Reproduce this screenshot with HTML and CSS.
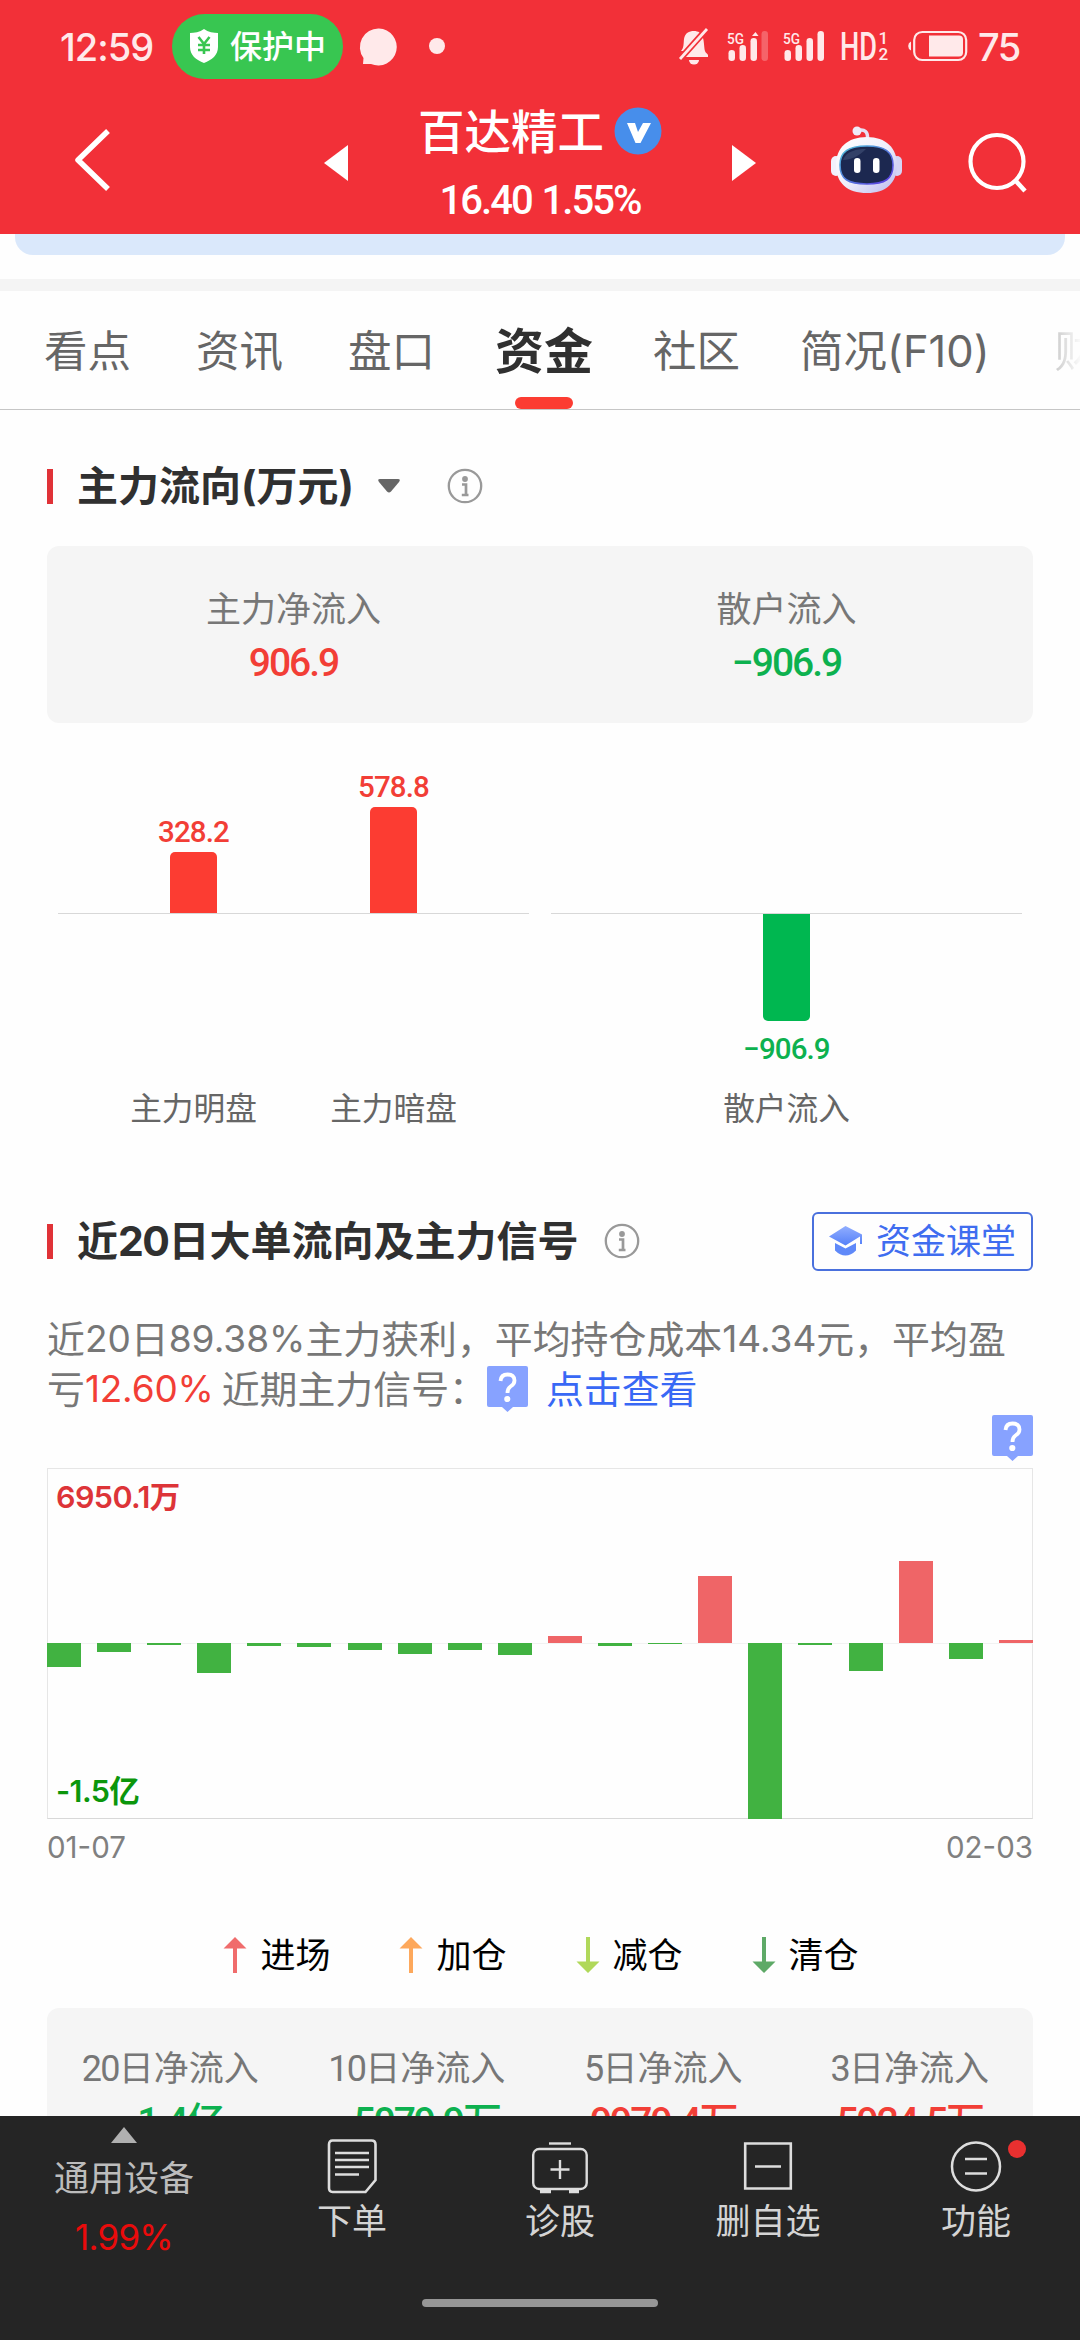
FILE: index.html
```html
<!DOCTYPE html>
<html lang="zh-CN">
<head>
<meta charset="utf-8">
<meta name="viewport" content="width=1080">
<title>百达精工 资金</title>
<link rel="stylesheet" href="styles.css">
</head>
<body>
<div class="screen">
  <header class="header">
    <div class="status">
      <span class="clock">12:59</span>
      <span class="pill">
        <svg width="30" height="34" viewBox="0 0 30 34"><path d="M15 0C19 3 25 4 29 4V18C29 26 23 31 15 34C7 31 1 26 1 18V4C5 4 11 3 15 0Z" fill="#fff"/><path d="M9.500 8L15 15L20.500 8M15 15V25M9 16H21M9 21H21" fill="none" stroke="#38c651" stroke-width="2.600"/></svg>
        <span>保护中</span>
      </span>
      <svg class="bubble" width="38" height="38" viewBox="0 0 38 38"><path d="M19 0.500A18.500 18.500 0 1 1 11 36L3 36L3.500 30A18.500 18.500 0 0 1 19 0.500Z" fill="#ffe9ea"/></svg>
      <span class="status-dot"></span>
      <span class="status-right">
        <svg width="30" height="38" viewBox="0 0 30 38"><path d="M2 24C5 21 4.500 16 5 12C6 6 10 4 15 4C17 4 19 4.500 20.500 5.500L4 24ZM7 30L24 11C25 14 25 18 25.500 22C26 26 28 26 29 28V30Z" fill="#ffe9ea"/><path d="M10 33H20A5 4.500 0 0 1 10 33Z" fill="#ffe9ea"/><path d="M1 32L28 2" stroke="#ffe9ea" stroke-width="2.800"/></svg>
        <svg class="signal" width="42" height="32" viewBox="0 0 42 32"><text x="0" y="13.500" class="net" textLength="17" lengthAdjust="spacingAndGlyphs">5G</text><g fill="#ffe9ea"><rect x="1.500" y="20" width="6.500" height="11" rx="3.200"/><rect x="12.500" y="15" width="6.500" height="16" rx="3.200"/><rect x="23.500" y="8" width="6.500" height="23" rx="3.200"/><path d="M25 6L28.500 2L31.500 6Z"/><rect x="34.500" y="1" width="6.500" height="30" rx="3.200" opacity=".28"/></g></svg>
        <svg class="signal second" width="42" height="32" viewBox="0 0 42 32"><text x="0" y="13.500" class="net" textLength="17" lengthAdjust="spacingAndGlyphs">5G</text><g fill="#ffe9ea"><rect x="1.500" y="20" width="6.500" height="11" rx="3.200"/><rect x="12.500" y="15" width="6.500" height="16" rx="3.200"/><rect x="23.500" y="8" width="6.500" height="23" rx="3.200"/><rect x="34.500" y="1" width="6.500" height="30" rx="3.200"/></g></svg>
        <svg class="hd" width="48" height="34" viewBox="0 0 48 34"><g fill="#ffe9ea" class="hd-text"><text x="-1" y="31" font-size="39" textLength="37" lengthAdjust="spacingAndGlyphs">HD</text><text x="37.500" y="14.500" font-size="17">1</text><text x="37.500" y="31" font-size="17">2</text></g></svg>
        <svg class="battery" width="60" height="32" viewBox="0 0 60 32"><path d="M3 11.500A5 5 0 0 0 3 20.500Z" fill="#ffe9ea"/><rect x="6.200" y="2" width="52" height="28" rx="8" fill="none" stroke="#ffe9ea" stroke-width="2.200"/><path d="M21 5.500H51Q55 5.500 55 9.500V22.500Q55 26.500 51 26.500H21Z" fill="#ffe9ea"/></svg>
        <span class="clock level">75</span>
      </span>
    </div>
    <div class="titlebar">
      <svg class="back" width="38" height="66" viewBox="0 0 38 66"><path d="M34 4L4 33L34 62" fill="none" stroke="#fff" stroke-width="5.500" stroke-linejoin="round"/></svg>
      <svg class="prev" width="24" height="36" viewBox="0 0 24 36"><path d="M24 0V36L0 18Z" fill="#fff"/></svg>
      <div class="stock">
        <div class="stock-name"><span>百达精工</span>
          <svg width="48" height="48" viewBox="0 0 48 48"><circle cx="24" cy="24" r="23.500" fill="#478eeb"/><path d="M13 16H21L24 25L29 16H37L26.500 36H21.500Z" fill="#fff"/></svg>
        </div>
        <div class="stock-price">16.40 1.55%</div>
      </div>
      <svg class="next" width="24" height="36" viewBox="0 0 24 36"><path d="M0 0V36L24 18Z" fill="#fff"/></svg>
      <svg class="robot" width="72" height="68" viewBox="0 0 72 68">
        <defs><linearGradient id="shell" x1="0" y1="0" x2="1" y2="1"><stop offset="0" stop-color="#fff"/><stop offset=".5" stop-color="#f0effb"/><stop offset="1" stop-color="#b9b9ee"/></linearGradient><linearGradient id="rim" x1="0" y1="0" x2="1" y2="1"><stop offset="0" stop-color="#4fc3d9"/><stop offset="1" stop-color="#5a35e0"/></linearGradient></defs>
        <path d="M27 4.500C34 3 37 6 36.500 13" fill="none" stroke="#e6e0f4" stroke-width="3.500"/><circle cx="26" cy="5" r="4.500" fill="#efeaf8"/>
        <rect x="0" y="30" width="10" height="20" rx="5" fill="#f2f0fc"/><rect x="61" y="30" width="10" height="20" rx="5" fill="#d5d4f4"/>
        <path d="M36 11C55 11 66 22 66 39C66 57 55 67 36 67C16 67 5 57 5 39C5 22 16 11 36 11Z" fill="url(#shell)"/>
        <path d="M36 20C54 20 62 26 62 39C62 53 54 58 36 58C17 58 9 53 9 39C9 26 17 20 36 20Z" fill="#1c2850" stroke="url(#rim)" stroke-width="1.600"/>
        <path d="M12 34C15 25 26 23 35 23C28 30 20 34 12 34Z" fill="#47557c" opacity=".55"/>
        <rect x="23" y="32" width="6.500" height="15" rx="3.200" fill="#fff"/><rect x="42" y="32" width="6.500" height="15" rx="3.200" fill="#fff"/>
      </svg>
      <svg class="search" width="60" height="62" viewBox="0 0 60 62"><circle cx="29" cy="29.500" r="26.500" fill="none" stroke="#fff" stroke-width="4.200"/><path d="M47 48L57 59" stroke="#fff" stroke-width="4.500"/></svg>
    </div>
  </header>

  <main class="content">
    <div class="promo"></div>
    <div class="divider"></div>
    <nav class="tabs">
      <span class="tab">看点</span><span class="tab">资讯</span><span class="tab">盘口</span><span class="tab active">资金</span><span class="tab wide">社区</span><span class="tab">简况(F10)</span><span class="tab cut">财务</span>
    </nav>

    <section class="flow">
      <div class="section-head">
        <i class="mark"></i><h2>主力流向(万元)</h2>
        <svg class="caret" width="24" height="16" viewBox="0 0 24 16"><path d="M3 1H21Q24 1 22 4L14 13.500Q12 15.500 10 13.500L2 4Q0 1 3 1Z" fill="#666"/></svg>
        <svg class="info" width="36" height="36" viewBox="0 0 36 36"><circle cx="18" cy="18" r="16.200" fill="none" stroke="#999" stroke-width="2.300"/><circle cx="18" cy="11" r="2.900" fill="#999"/><path d="M15 16.500H19V27M14.800 27H21.500" fill="none" stroke="#999" stroke-width="2.700"/></svg>
      </div>
      <div class="summary">
        <div class="cell"><span class="label">主力净流入</span><span class="num up">906.9</span></div>
        <div class="cell"><span class="label">散户流入</span><span class="num down">−906.9</span></div>
      </div>
      <div class="bars">
        <div class="group">
          <div class="column"><div class="pos"><span class="val up">328.2</span><i class="bar" style="height:61px"></i></div><span class="name">主力明盘</span></div>
          <div class="column"><div class="pos"><span class="val up">578.8</span><i class="bar" style="height:106px"></i></div><span class="name">主力暗盘</span></div>
        </div>
        <div class="group">
          <div class="column"><div class="pos"></div><div class="neg"><i class="bar" style="height:107px"></i><span class="val down">−906.9</span></div><span class="name">散户流入</span></div>
        </div>
      </div>
    </section>

    <section class="signals">
      <div class="section-head">
        <i class="mark"></i><h2>近<span class="digits">20</span>日大单流向及主力信号</h2>
        <svg class="info near" width="36" height="36" viewBox="0 0 36 36"><circle cx="18" cy="18" r="16.200" fill="none" stroke="#999" stroke-width="2.300"/><circle cx="18" cy="11" r="2.900" fill="#999"/><path d="M15 16.500H19V27M14.800 27H21.500" fill="none" stroke="#999" stroke-width="2.700"/></svg>
        <span class="course">
          <svg width="34" height="30" viewBox="0 0 34 30"><defs><linearGradient id="cap" x1="0" y1="0" x2="0" y2="1"><stop offset="0" stop-color="#91aeff"/><stop offset="1" stop-color="#5580f8"/></linearGradient></defs><path d="M16.500 0L33 8.500V18H31V10.500L16.500 19.500L0 10.500Z" fill="url(#cap)"/><path d="M6 17L16.500 22.500L27 17V24.500Q22 29.500 16.500 29.500T6 24.500Z" fill="#5f89f9"/></svg>
          资金课堂</span>
      </div>
      <p class="desc"><span class="line">近<b>20</b>日<b>89.38%</b>主力获利，平均持仓成本<b>14.34</b>元，平均盈</span><span class="line">亏<b class="up">12.60%</b><span class="gap"></span>近期主力信号：<svg class="tip" width="41" height="46" viewBox="0 0 41 46"><path d="M2 0H39Q41 0 41 2V39Q41 41 39 41H26L20.500 46L15 41H2Q0 41 0 39V2Q0 0 2 0Z" fill="#87a2ff"/><path d="M13.500 15Q14 8.500 20.500 8.500Q27.500 8.500 27.500 14.500Q27.500 18 23.500 20.500Q20.500 22.500 20.500 27" fill="none" stroke="#fff" stroke-width="3.800"/><circle cx="20.300" cy="33" r="3.100" fill="#fff"/></svg><a class="link">点击查看</a></span></p>
      <div class="tip-row"><svg class="tip" width="41" height="46" viewBox="0 0 41 46"><path d="M2 0H39Q41 0 41 2V39Q41 41 39 41H26L20.500 46L15 41H2Q0 41 0 39V2Q0 0 2 0Z" fill="#87a2ff"/><path d="M13.500 15Q14 8.500 20.500 8.500Q27.500 8.500 27.500 14.500Q27.500 18 23.500 20.500Q20.500 22.500 20.500 27" fill="none" stroke="#fff" stroke-width="3.800"/><circle cx="20.300" cy="33" r="3.100" fill="#fff"/></svg></div>
      <div class="history">
        <div class="half top">
          <i></i><i></i><i></i><i></i><i></i><i></i><i></i><i></i><i></i><i></i><i style="height:7px"></i><i></i><i></i><i style="height:67.500px"></i><i></i><i></i><i></i><i style="height:82px"></i><i></i><i style="height:3px"></i>
        </div>
        <div class="half bottom">
          <i style="height:24px"></i><i style="height:8.500px"></i><i style="height:2px"></i><i style="height:30px"></i><i style="height:2.500px"></i><i style="height:4px"></i><i style="height:7px"></i><i style="height:11px"></i><i style="height:6.500px"></i><i style="height:12px"></i><i></i><i style="height:2.500px"></i><i style="height:.6px"></i><i></i><i style="height:176px"></i><i style="height:2px"></i><i style="height:28px"></i><i></i><i style="height:15.500px"></i><i></i>
        </div>
        <span class="max">6950.1万</span>
        <span class="min">-1.5亿</span>
      </div>
      <div class="dates"><span>01-07</span><span>02-03</span></div>
      <div class="legend">
        <span><svg width="24" height="36" viewBox="0 0 24 36"><path d="M12 0L23.500 11.500H14V36H10V11.500H.5Z" fill="#f06c6c"/></svg>进场</span>
        <span><svg width="24" height="36" viewBox="0 0 24 36"><path d="M12 0L23.500 11.500H14V36H10V11.500H.5Z" fill="#fda85c"/></svg>加仓</span>
        <span><svg width="24" height="36" viewBox="0 0 24 36"><path d="M12 36L.5 24.500H10V0H14V24.500H23.500Z" fill="#b0d85a"/></svg>减仓</span>
        <span><svg width="24" height="36" viewBox="0 0 24 36"><path d="M12 36L.5 24.500H10V0H14V24.500H23.500Z" fill="#5ea967"/></svg>清仓</span>
      </div>
      <div class="summary four">
        <div class="cell"><span class="label"><b>20</b>日净流入</span><span class="num down">−1.4亿</span></div>
        <div class="cell"><span class="label"><b>10</b>日净流入</span><span class="num down">−5079.9万</span></div>
        <div class="cell"><span class="label"><b>5</b>日净流入</span><span class="num up">9979.4万</span></div>
        <div class="cell"><span class="label"><b>3</b>日净流入</span><span class="num up">5924.5万</span></div>
      </div>
    </section>
  </main>

  <footer class="footer">
    <nav class="actions">
      <div class="action sector"><svg width="26" height="16" viewBox="0 0 26 16"><path d="M13 0L26 16H0Z" fill="#b0b0b0"/></svg><span>通用设备</span><span class="pct">1.99%</span></div>
      <div class="action"><svg width="60" height="58" viewBox="0 0 60 58"><g fill="none" stroke="#ddd" stroke-width="2.600"><path d="M10.500 4.500H49.500Q53.500 4.500 53.500 8.500V44L43.500 56H10.500Q7 56 7 52V8.500Q7 4.500 10.500 4.500Z"/><path d="M13 17H47M13 24H47M13 31H47M13 38.500H37"/></g></svg><span>下单</span></div>
      <div class="action"><svg width="60" height="58" viewBox="0 0 60 58"><g fill="none" stroke="#ddd" stroke-width="2.400"><path d="M19 7.500H41"/><rect x="3.200" y="13" width="53.500" height="40" rx="6"/><path d="M30 24V43M20.500 33.500H39.500"/><path d="M10 55.500H21M39 55.500H49" stroke-width="3.500"/></g></svg><span>诊股</span></div>
      <div class="action"><svg width="60" height="58" viewBox="0 0 60 58"><path d="M7.200 7.500H52.800V52.500H7.200ZM17 30.500H43" fill="none" stroke="#ddd" stroke-width="2.600"/></svg><span>删自选</span></div>
      <div class="action"><svg width="60" height="58" viewBox="0 0 60 58"><circle cx="30" cy="30.500" r="24" fill="none" stroke="#ddd" stroke-width="2.500"/><path d="M19 23H41M19 37.500H41" stroke="#ddd" stroke-width="2.500"/></svg><span>功能</span><i class="badge"></i></div>
    </nav>
    <div class="home"></div>
  </footer>
</div>
</body>
</html>
```

FILE: styles.css
```css
* { box-sizing: border-box; }
html, body { margin: 0; }
body { font-family: Inter, "Noto Sans CJK SC", sans-serif; background: #fff; }
svg { display: block; flex: none; overflow: visible; }
i { font-style: normal; }

.screen { width: 1080px; height: 2340px; display: flex; flex-direction: column; overflow: hidden; background: #fefefe; }

/* header */
.header { height: 234px; flex: none; background: #f23038; color: #fff; }
.status { height: 92px; display: flex; align-items: center; padding: 0 60px 0 60px; }
.clock { font: 500 38px/92px Inter, sans-serif; letter-spacing: -1px; color: #ffe9ea; width: 94px; white-space: nowrap; padding-top: 2px; }
.pill { width: 171px; height: 65px; margin-left: 18px; border-radius: 33px; background: #38c651; display: flex; align-items: center; justify-content: flex-end; gap: 11px; padding-right: 17px; font-size: 32px; font-weight: 500; line-height: 65px; }
.bubble { margin-left: 17px; margin-top: 2px; }
.status-dot { width: 16px; height: 16px; margin-left: 31px; border-radius: 50%; background: #ffe9ea; }
.status-right { margin-left: auto; display: flex; align-items: center; }
.signal { margin-left: 18px; }
.signal.second { margin-left: 14px; }
.hd { margin-left: 16px; }
.battery { margin-left: 19px; }
.net { font: 500 15px Roboto, sans-serif; fill: #ffe9ea; }
.hd-text { font-family: Roboto, sans-serif; font-weight: 500; }
.level { width: 42px; margin-left: 10px; letter-spacing: -1.500px; }

.titlebar { height: 142px; display: flex; align-items: flex-start; }
.back { margin: 35px 0 0 74px; }
.prev { margin: 53px 0 0 212px; }
.stock { width: 384px; display: flex; flex-direction: column; align-items: center; }
.stock-name { display: flex; align-items: center; gap: 10px; font-size: 46.500px; font-weight: 500; line-height: 70px; margin-top: 4px; }
.stock-name span { padding-top: 2px; line-height: 68px; }
.stock-price { font: 500 40px/46px Roboto, sans-serif; letter-spacing: -2px; word-spacing: 2px; margin-top: 12px; }
.next { margin: 53px 0 0 0; }
.robot { margin: 34px 0 0 75px; }
.search { margin: 40px 0 0 65px; }

/* scrolled content */
.content { flex: 1; min-height: 0; overflow: hidden; }
.promo { height: 21px; margin: 0 15px; background: #dae8fb; border-radius: 0 0 18px 18px; }
.divider { height: 12px; margin-top: 24px; background: #f4f4f4; }
.tabs { height: 119px; display: flex; align-items: center; padding-left: 44px; border-bottom: 1px solid #c6c6c6; white-space: nowrap; overflow: hidden; color: #666; font-size: 43.500px; }
.tab { margin-right: 65px; line-height: 117px; padding-top: 2px; }
.tab.wide { margin-right: 60px; }
.tab.active { font-size: 49px; font-weight: 700; color: #303030; margin-right: 60px; margin-left: -5px; position: relative; }
.tab.active::after { content: ""; position: absolute; left: 50%; bottom: 1px; width: 58px; height: 12px; margin-left: -29px; border-radius: 6px; background: #fc3c32; }
.tab.cut { color: transparent; background: linear-gradient(90deg, #ccc, #fff 28px); -webkit-background-clip: text; background-clip: text; margin-right: 0; }

.section-head { display: flex; align-items: center; height: 60px; margin: 0 47px; }
.mark { width: 6px; height: 35px; background: #e03237; }
h2 { margin: 0 0 0 24px; font-size: 41px; line-height: 60px; font-weight: 700; color: #303030; white-space: nowrap; }
.digits { letter-spacing: -1.500px; }
.caret { margin-left: 23px; }
.info { margin-left: 46px; }
.info.near { margin-left: 26px; }
.flow { padding-top: 46px; }

.summary { margin: 30px 47px 0; height: 177px; border-radius: 12px; background: #f5f5f5; display: grid; grid-template-columns: 1fr 1fr; padding-top: 38px; }
.cell { display: flex; flex-direction: column; align-items: center; }
.label { height: 50px; font-size: 35px; line-height: 50px; color: #777; white-space: nowrap; }
.label b { font: 400 36px/1 Roboto, sans-serif; letter-spacing: -1.700px; }
.num { font: 500 39px/54px Roboto, "Noto Sans CJK SC", sans-serif; letter-spacing: -2px; margin-top: 2px; white-space: nowrap; }
.up { color: #f23e36; }
.down { color: #0db14f; }

.bars { display: flex; gap: 22px; margin: 0 58px; height: 488px; }
.group { flex: 1; display: flex; justify-content: center; gap: 74px; background: linear-gradient(#d8d8d8, #d8d8d8) 0 190px / 100% 1px no-repeat; }
.column { width: 126px; display: flex; flex-direction: column; align-items: center; }
.pos { height: 190px; display: flex; flex-direction: column; justify-content: flex-end; align-items: center; flex: none; }
.neg { height: 170px; margin-top: 1px; display: flex; flex-direction: column; align-items: center; }
.column .name { margin-top: auto; padding-bottom: 78px; font-size: 31.700px; line-height: 48px; color: #666; white-space: nowrap; }
.bar { width: 47px; background: #fc3c32; border-radius: 5px 5px 0 0; }
.neg .bar { background: #00b750; border-radius: 0 0 5px 5px; }
.val { font: 500 29.500px/34px Roboto, sans-serif; letter-spacing: -.9px; margin-bottom: 3px; }
.neg .val { margin: 11px 0 0; }

.course { margin-left: auto; width: 221px; height: 59px; border: 2px solid #4a70dd; border-radius: 6px; display: flex; align-items: center; gap: 13px; padding-left: 15px; color: #3f6df0; font-size: 35px; line-height: 55px; white-space: nowrap; }

.desc { margin: 43px 47px 0; font-size: 37.900px; color: #777; }
.line { display: flex; align-items: center; height: 50px; line-height: 50px; white-space: nowrap; }
.line b { font-weight: 400; font-size: 37px; letter-spacing: 0; }
.line b.up { letter-spacing: -.2px; }
.gap { width: 8px; }
.link { color: #3868f5; margin-left: 18px; }
.tip-row { display: flex; justify-content: flex-end; margin: 0 47px; height: 54px; padding-top: 1px; }

.history { position: relative; height: 351px; margin: 0 47px; border: 1px solid #e6e6e6; border-bottom-color: #d8d8d8; }
.half { display: flex; justify-content: space-between; height: 174px; margin: 0 -1px; }
.half i { width: 34px; }
.top { align-items: flex-end; }
.top i { background: #ef6567; }
.bottom { height: 175px; align-items: flex-start; border-top: 1px solid #f2f2f2; }
.bottom i { background: #41b241; margin-top: -1px; }
.max, .min { position: absolute; left: 8px; font-size: 30.500px; font-weight: 600; line-height: 40px; letter-spacing: -.6px; }
.max { top: 8px; color: #dd3438; }
.min { bottom: 7px; color: #0b960b; }
.dates { display: flex; justify-content: space-between; margin: 7px 47px 0; font-size: 29.500px; line-height: 42px; color: #808080; }

.legend { display: flex; justify-content: center; gap: 69px; margin-top: 60px; margin-left: 2px; color: #000; font-size: 35px; line-height: 54px; }
.legend span { display: flex; align-items: center; gap: 13px; }
.four { grid-template-columns: repeat(4, 1fr); margin-top: 26px; padding-top: 35px; }

/* bottom bar */
.footer { height: 224px; flex: none; background: #252525; color: #d4d4d4; }
.actions { display: grid; grid-template-columns: 248px repeat(4, 208px); height: 183px; }
.action { position: relative; display: flex; flex-direction: column; align-items: center; padding-top: 20px; font-size: 35px; line-height: 50px; }
.action span { margin-top: 2px; white-space: nowrap; }
.sector { padding-top: 11px; color: #bcbcbc; }
.sector span { margin-top: 10px; }
.sector .pct { color: #ea0b0b; margin-top: 9px; letter-spacing: -.8px; }
.badge { position: absolute; left: 136px; top: 24px; width: 18px; height: 18px; border-radius: 50%; background: #e93030; }
.home { width: 236px; height: 8px; margin: 0 auto; border-radius: 4px; background: #969696; }
```
